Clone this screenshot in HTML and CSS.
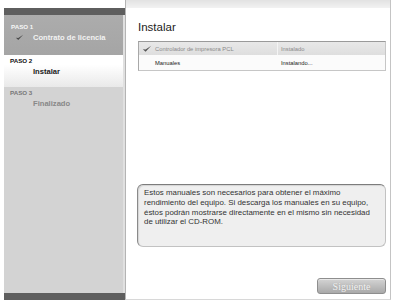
FILE: index.html
```html
<!DOCTYPE html>
<html lang="es">
<head>
<meta charset="utf-8">
<title>Instalar</title>
<link rel="stylesheet" href="styles.css">
</head>
<body>
<div class="app">
  <aside class="sidebar">
    <div class="bar"></div>
    <div class="steps">
      <div class="step done">
        <div class="step-label">PASO 1</div>
        <div class="step-name">
          <svg class="check" viewBox="0 0 10 8" width="9" height="7"><path d="M0.8 4.2 L3.6 6.8 L9.2 0.8 L3.6 4.6 Z" fill="#4b4b4b"/></svg>
          <span>Contrato de licencia</span>
        </div>
      </div>
      <div class="step current">
        <div class="step-label">PASO 2</div>
        <div class="step-name"><span>Instalar</span></div>
      </div>
      <div class="step todo">
        <div class="step-label">PASO 3</div>
        <div class="step-name"><span>Finalizado</span></div>
      </div>
    </div>
    <div class="bar"></div>
  </aside>
  <main class="main">
    <div class="topstrip"></div>
    <div class="content">
      <h1 class="title">Instalar</h1>
      <div class="items">
        <div class="row row-done">
          <div class="cell name">
            <svg class="tcheck" viewBox="0 0 10 8" width="10" height="8"><path d="M0.8 4.2 L3.6 6.8 L9.2 0.8 L3.6 4.6 Z" fill="#555"/></svg>
            <span>Controlador de impresora PCL</span>
          </div>
          <div class="cell status">Instalado</div>
        </div>
        <div class="row row-active">
          <div class="cell name"><span>Manuales</span></div>
          <div class="cell status">Instalando...</div>
        </div>
      </div>
      <div class="desc">Estos manuales son necesarios para obtener el máximo rendimiento del equipo. Si descarga los manuales en su equipo, éstos podrán mostrarse directamente en el mismo sin necesidad de utilizar el CD-ROM.</div>
      <div class="footer"><button class="btn" type="button">Siguiente</button></div>
    </div>
  </main>
</div>
</body>
</html>
```
FILE: styles.css
```css
html, body {
  margin: 0;
  padding: 0;
  background: #ffffff;
  font-family: "Liberation Sans", Arial, sans-serif;
}

.app {
  display: flex;
  width: 395px;
  height: 300px;
  overflow: hidden;
}

.sidebar {
  width: 121px;
  margin-left: 4px;
  padding-top: 8px;
  display: flex;
  flex-direction: column;
}

.bar {
  height: 7px;
  background: #5e5e5e;
  flex: none;
}

.steps {
  flex: 1;
  display: flex;
  flex-direction: column;
  border-right: 2px solid #e0e0e0;
}

.step {
  box-sizing: border-box;
}

.step-label {
  font-size: 6.2px;
  font-weight: bold;
  line-height: 7px;
  padding-left: 6px;
}

.step-name {
  display: flex;
  align-items: center;
  font-size: 7.6px;
  font-weight: bold;
  line-height: 9px;
  padding-left: 29px;
  position: relative;
}

.check {
  position: absolute;
  left: 11px;
  top: 1px;
}

.done {
  height: 40px;
  padding-top: 8px;
  background: linear-gradient(to bottom, #acacac, #a5a5a5);
  color: #f6f6f6;
}

.done .step-label {
  padding-left: 7px;
}

.done .step-name {
  margin-top: 3px;
  color: #f2f2f2;
}

.current {
  height: 32px;
  padding-top: 2px;
  background: linear-gradient(to bottom, #ffffff 30%, #e9e9e9);
  color: #111;
}

.current .step-name {
  margin-top: 3px;
  color: #1a1a1a;
}

.todo {
  flex: 1;
  padding-top: 2px;
  background: #d3d3d3;
  color: #777;
}

.todo .step-name {
  margin-top: 3px;
  color: #888;
}

.main {
  flex: 1;
  margin-right: 4px;
  display: flex;
  flex-direction: column;
  border-left: 1px solid #b4b4b4;
  border-right: 1px solid #c4c4c4;
  border-bottom: 1px solid #d8d8d8;
  box-sizing: border-box;
}

.topstrip {
  height: 8px;
  background: linear-gradient(to bottom, #e2e2e2, #f2f2f2);
  flex: none;
}

.content {
  flex: 1;
  display: flex;
  flex-direction: column;
  padding: 0 4px 0 12px;
}

.title {
  margin: 12px 0 0 0;
  font-size: 11.5px;
  font-weight: normal;
  line-height: 14px;
  color: #222;
}

.items {
  margin-top: 7px;
  border: 1px solid #c6c6c6;
  border-top-color: #9a9a9a;
  border-left-color: #a8a8a8;
  font-size: 5.8px;
}

.row {
  display: flex;
  align-items: center;
}

.row-done {
  height: 13px;
  background: linear-gradient(to bottom, #e8e8e8, #dedede);
  color: #8a8a8a;
}

.row-active {
  height: 15px;
  background: #fbfbfb;
  color: #222;
}

.cell {
  height: 100%;
  display: flex;
  align-items: center;
  box-sizing: border-box;
}

.name {
  width: 139px;
  padding-left: 16px;
  position: relative;
}

.row-done .name {
  border-right: 1px solid #f4f4f4;
}

.tcheck {
  position: absolute;
  left: 3px;
  top: 3px;
}

.status {
  flex: 1;
  padding-left: 3px;
}

.desc {
  margin-top: auto;
  height: 63px;
  box-sizing: border-box;
  padding: 3px 5px 3px 6px;
  border: 1px solid #c2c2c2;
  border-top-color: #7c7c7c;
  border-left-color: #8a8a8a;
  border-radius: 6px;
  background: #efefef;
  box-shadow: inset 1px 1px 1px #d4d4d4;
  font-size: 7.9px;
  line-height: 9.8px;
  color: #333;
  margin-left: -1px;
}

.footer {
  display: flex;
  justify-content: flex-end;
  margin-top: 31px;
  margin-bottom: 5px;
}

.btn {
  width: 69px;
  height: 16px;
  margin: 0;
  padding: 0;
  border: 1px solid #8e8e8e;
  border-radius: 3px;
  background: linear-gradient(to bottom, #d4d4d4, #a9a9a9);
  box-shadow: inset 0 1px 0 #e8e8e8;
  font-family: "Liberation Serif", "Times New Roman", serif;
  font-size: 10px;
  color: #f4f4f4;
  text-shadow: 0 0 1px #9a9a9a;
}
```
